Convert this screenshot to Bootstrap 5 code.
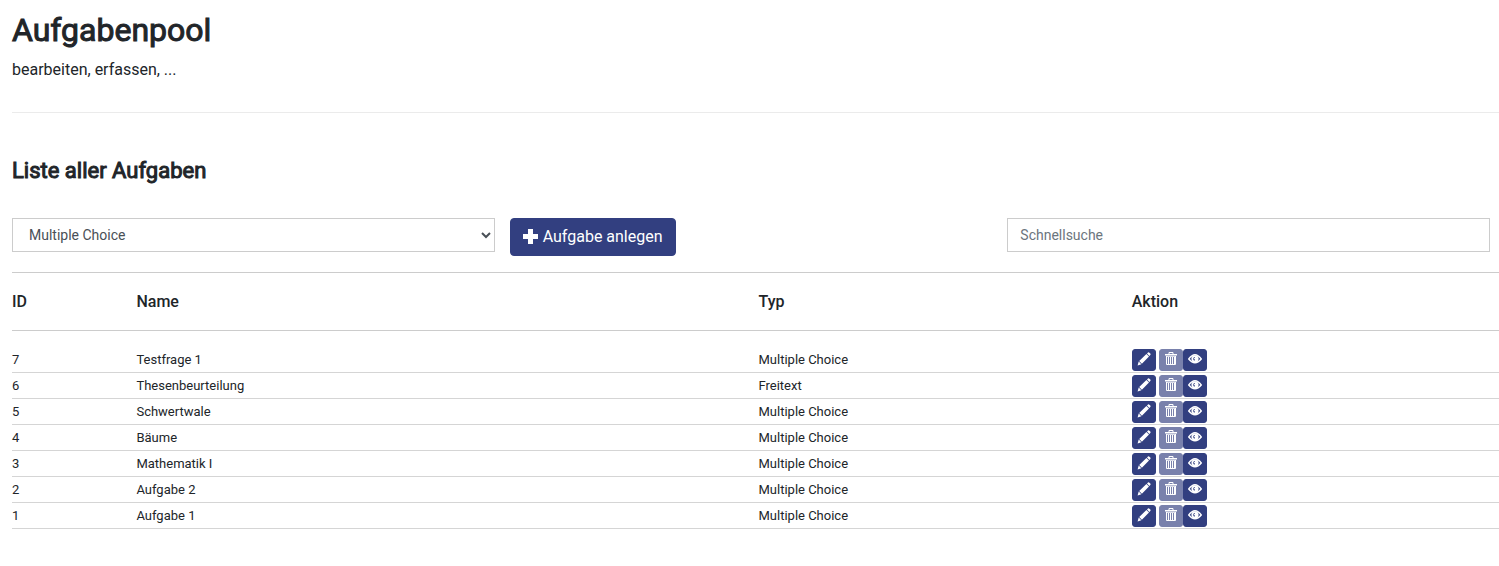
<!DOCTYPE html>
<html lang="de">
<head>
<meta charset="utf-8">
<meta name="viewport" content="width=device-width, initial-scale=1">
<title>Aufgabenpool</title>
<link href="https://cdn.jsdelivr.net/npm/bootstrap@5.3.0/dist/css/bootstrap.min.css" rel="stylesheet">
<style>
  body { font-family: Roboto, "Liberation Sans", sans-serif; color: #212529; }
  .page { padding: 10px 0 32px 12px; }
  .bleed { width: calc(100% + 6px); }
  h1, h2 { font-weight: 400; -webkit-text-stroke: 1px currentColor; }
  h1 { font-size: 32px; line-height: 40px; margin-bottom: 8px; }
  h2 { font-size: 22px; line-height: 26px; margin: 45px 0 34px; }
  .intro { line-height: 24px; margin-bottom: 30px; }
  .rule { border-top: 1px solid #ebebeb; }
  .toolbar { --bs-gutter-x: 0; padding-bottom: 16px; }
  .toolbar > div { padding-right: 15px; }
  .field { height: 34px; width: 100%; font-size: 14px; border: 1px solid #ccc; border-radius: 0; background: #fff; color: #495057; padding: 6px 12px; }
  .field::placeholder { color: #6c757d; opacity: 1; }
  .btn-pool { --bs-btn-color: #fff; --bs-btn-bg: #323f80; --bs-btn-border-color: #323f80; --bs-btn-hover-color: #fff; --bs-btn-hover-bg: #283369; --bs-btn-disabled-color: #fff; --bs-btn-disabled-bg: #323f80; --bs-btn-disabled-border-color: #323f80; --bs-btn-border-radius: 4px; }
  .btn-tool { width: 24px; height: 22px; padding: 0 0 1px; border-radius: 3px; }
  .btn-edit { margin-right: 3px; }
  .pool-table { table-layout: fixed; border-collapse: separate; border-spacing: 0; }
  .pool-table th { height: 59px; padding: 0; font-weight: 500; border-top: 1px solid #ccc; border-bottom: 1px solid #ccc; }
  .pool-table td { height: 26px; padding: 0; font-size: 13px; line-height: 20px; border-bottom: 1px solid #d5d5d5; }
  .pool-table tbody tr:first-child td { height: 42px; padding-top: 16px; }
  .w-id { width: 8.3333%; } .w-name { width: 41.6667%; } .w-typ, .w-act { width: 25%; }
</style>
</head>
<body>
<svg class="d-none" aria-hidden="true">
  <symbol id="pencil" viewBox="0 0 14 14"><path fill="currentColor" d="M10 1.5 11 .6Q11.7 0 12.4.7L13.3 1.6Q14 2.300 13.300 3L12.400 4ZM9.400 2 12 4.600 4.900 11.700 2.200 9.100ZM1.700 9.600 4.400 12.200.6 13.400Z"/></symbol>
  <symbol id="trash" viewBox="0 0 14 14"><path fill="none" stroke="currentColor" d="M5 2V.5h4V2M2.500 4v8.500h9V4M4.500 5v7M6.500 5v7M8.500 5v7M10.500 5v7"/><path fill="currentColor" d="M1 2h12v1.500H1zM2 4.200h10V5H2z"/></symbol>
  <symbol id="eye" viewBox="0 0 14 14"><path fill="none" stroke="currentColor" stroke-width="1.300" d="M.7 7Q7-1.500 13.300 7Q7 14.500.7 7Z"/><path fill="currentColor" fill-rule="evenodd" d="M7 3.200a3.600 3.600 0 1 1 0 7.200a3.600 3.600 0 1 1 0-7.200M7 5Q5.200 5 5.200 6.900Q5.200 8.500 7 8.500L7 7.600Q6 7.600 6 6.600Q6 5.800 7 5.700Z"/></symbol>
</svg>
<main class="page overflow-hidden">
  <h1>Aufgabenpool</h1>
  <p class="intro">bearbeiten, erfassen, ...</p>
  <div class="rule"></div>
  <h2>Liste aller Aufgaben</h2>
  <form class="row toolbar bleed">
    <div class="col-4"><select class="field" aria-label="Aufgabentyp"><option>Multiple Choice</option><option>Freitext</option></select></div>
    <div class="col-4"><button type="button" class="btn btn-pool d-inline-flex align-items-center gap-1"><svg width="16" height="16" viewBox="0 0 16 16" aria-hidden="true"><path fill="currentColor" d="M5 0h5v5h5v5h-5v5H5v-5H0V5h5z"/></svg>Aufgabe anlegen</button></div>
    <div class="col-4"><input type="search" class="field" placeholder="Schnellsuche" aria-label="Schnellsuche"></div>
  </form>
  <table class="pool-table bleed">
    <thead><tr><th class="w-id" scope="col">ID</th><th class="w-name" scope="col">Name</th><th class="w-typ" scope="col">Typ</th><th class="w-act" scope="col">Aktion</th></tr></thead>
    <tbody id="tasks"></tbody>
  </table>
</main>
<script src="https://cdn.jsdelivr.net/npm/bootstrap@5.3.0/dist/js/bootstrap.bundle.min.js"></script>
<script>
  const tasks = [[7, 'Testfrage 1', 'Multiple Choice'], [6, 'Thesenbeurteilung', 'Freitext'], [5, 'Schwertwale', 'Multiple Choice'], [4, 'Bäume', 'Multiple Choice'], [3, 'Mathematik I', 'Multiple Choice'], [2, 'Aufgabe 2', 'Multiple Choice'], [1, 'Aufgabe 1', 'Multiple Choice']];
  const tool = (icon, label, cls = '', state = '') => `<button type="button" class="btn btn-pool btn-tool d-flex align-items-center justify-content-center ${cls}" aria-label="${label}" ${state}><svg width="14" height="14"><use href="#${icon}"/></svg></button>`;
  document.getElementById('tasks').innerHTML = tasks.map(([id, name, type]) =>
    `<tr><td>${id}</td><td>${name}</td><td>${type}</td><td><div class="d-flex">${tool('pencil', 'Bearbeiten', 'btn-edit')}${tool('trash', 'Löschen', '', 'disabled')}${tool('eye', 'Ansehen')}</div></td></tr>`).join('');
</script>
</body>
</html>
